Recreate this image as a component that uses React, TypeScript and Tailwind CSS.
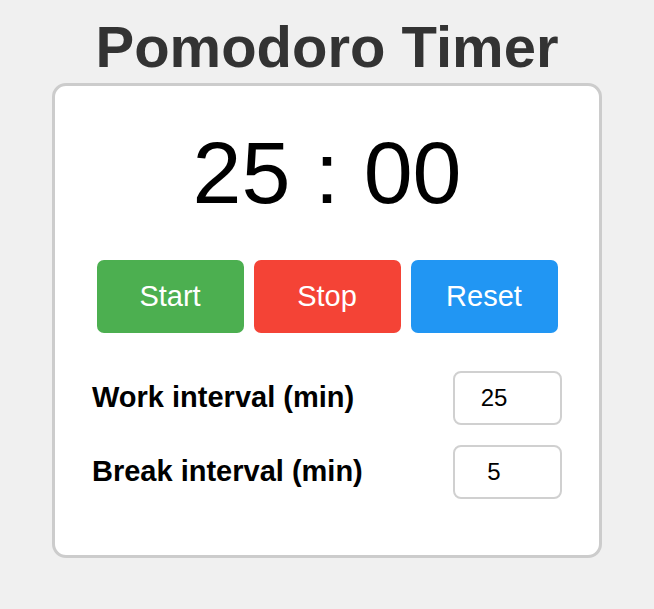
import { useState } from 'react';

export default function App() {
  const [work, setWork] = useState('25');
  const [rest, setRest] = useState('5');

  const buttons = [
    { id: 'start', label: 'Start', color: 'bg-[#4caf50]' },
    { id: 'stop', label: 'Stop', color: 'bg-[#f44336]' },
    { id: 'reset', label: 'Reset', color: 'bg-[#2196f3]' },
  ];

  return (
    <div className="min-h-screen bg-[#f0f0f0] font-['Liberation_Sans',Arial,sans-serif] pt-[13px]">
      <h1 className="text-center text-[58px] leading-[68px] font-bold text-[#333] mb-[2px]">Pomodoro Timer</h1>

      {/* Timer card */}
      <div className="mx-auto w-[550px] bg-white border-[3px] border-[#cccccc] rounded-[14px] px-[37px] pt-[38px] pb-[56px]">
        <div className="text-center text-[88px] leading-[98px] text-black">25 : 00</div>

        <div className="mt-[38px] flex justify-center gap-[10px]">
          {buttons.map((b) => (
            <button
              key={b.id}
              className={`w-[147px] h-[73px] rounded-[7px] text-white text-[29px] ${b.color}`}
            >
              {b.label}
            </button>
          ))}
        </div>

        {/* Settings */}
        <div className="mt-[38px] flex flex-col gap-[20px]">
          <div className="flex items-center justify-between">
            <label className="text-[29px] font-bold text-black">Work interval (min)</label>
            <input
              type="text"
              inputMode="numeric"
              value={work}
              onChange={(e) => setWork(e.target.value)}
              className="w-[109px] h-[54px] border-2 border-[#d0d0d0] rounded-[8px] pl-[6px] pr-[33px] text-center text-[24px] text-black outline-none"
            />
          </div>
          <div className="flex items-center justify-between">
            <label className="text-[29px] font-bold text-black">Break interval (min)</label>
            <input
              type="text"
              inputMode="numeric"
              value={rest}
              onChange={(e) => setRest(e.target.value)}
              className="w-[109px] h-[54px] border-2 border-[#d0d0d0] rounded-[8px] pl-[6px] pr-[33px] text-center text-[24px] text-black outline-none"
            />
          </div>
        </div>
      </div>
    </div>
  );
}
